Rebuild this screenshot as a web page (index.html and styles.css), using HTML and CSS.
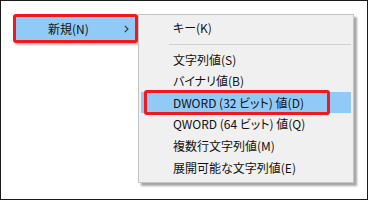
FILE: index.html
```html
<!DOCTYPE html>
<html lang="ja">
<head>
    <meta charset="UTF-8">
    <title>新規メニュー</title>
    <link rel="stylesheet" href="styles.css">
</head>
<body>
    <div class="screen">
        <div class="parent-item">
            <span>新規(N)</span>
            <svg class="chevron" width="5" height="8" viewBox="0 0 5 8"><path d="M0.8 0.8 L4 4 L0.8 7.2" fill="none" stroke="#333" stroke-width="1.1"/></svg>
        </div>
        <ul class="submenu">
            <li>キー(K)</li>
            <li class="sep"></li>
            <li>文字列値(S)</li>
            <li>バイナリ値(B)</li>
            <li class="active">DWORD (32 ビット) 値(D)<span class="mark"></span></li>
            <li>QWORD (64 ビット) 値(Q)</li>
            <li>複数行文字列値(M)</li>
            <li>展開可能な文字列値(E)</li>
        </ul>
    </div>
</body>
</html>
```

FILE: styles.css
```css
body { margin: 0; background: white; font-family: "Noto Sans CJK JP", "Noto Sans", sans-serif; font-size: 12px; color: #111; }
.screen { width: 368px; height: 200px; box-sizing: border-box; border: 1px solid #1a1a1a; padding: 13px 0 0 12px; display: flex; align-items: flex-start; }
.parent-item { width: 125px; height: 29px; box-sizing: border-box; border: 3px solid #f0191b; border-radius: 3px; background: #91c9f7; display: flex; align-items: center; justify-content: space-between; padding: 0 6px 0 32px; box-shadow: 2px 2px 2px rgba(0, 0, 0, 0.25); }
.chevron { display: block; }
.submenu { list-style: none; margin: 0; width: 216px; box-sizing: border-box; padding: 2px 2px 4px 2px; background: #f0f0f0; border: 1px solid #c4c4c4; box-shadow: 3px 3px 2px rgba(0, 0, 0, 0.35); font-feature-settings: "palt"; }
.submenu li { height: 21.6px; line-height: 21.6px; padding-left: 32px; white-space: nowrap; }
.submenu li.sep { height: 1px; padding: 0; margin: 5px 0 4px 28px; background: #cfcfcf; }
.submenu li.active { background: #91c9f7; position: relative; }
.mark { position: absolute; left: 3px; top: -2px; width: 186px; height: 25px; box-sizing: border-box; border: 3px solid #f0191b; border-radius: 3px; }
```
